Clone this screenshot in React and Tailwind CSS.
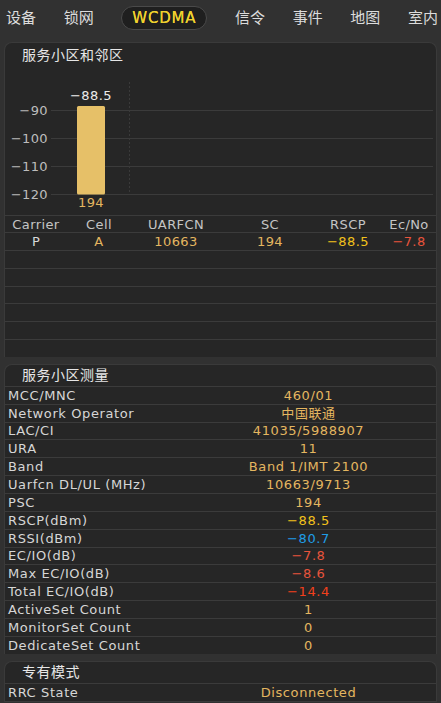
import React from "react";

const FONT = { fontFamily: '"DejaVu Sans", "Noto Sans CJK SC", sans-serif' };

const tabs = ["设备", "锁网", "WCDMA", "信令", "事件", "地图", "室内"];

const GOLD = "text-[#e4b660]";

const measures = [
  ["MCC/MNC", "460/01", GOLD],
  ["Network Operator", "中国联通", GOLD],
  ["LAC/CI", "41035/5988907", GOLD],
  ["URA", "11", GOLD],
  ["Band", "Band 1/IMT 2100", GOLD],
  ["Uarfcn DL/UL (MHz)", "10663/9713", GOLD],
  ["PSC", "194", GOLD],
  ["RSCP(dBm)", "−88.5", "text-[#f2c21c]"],
  ["RSSI(dBm)", "−80.7", "text-[#1f9de6]"],
  ["EC/IO(dB)", "−7.8", "text-[#e8543c]"],
  ["Max EC/IO(dB)", "−8.6", "text-[#e8543c]"],
  ["Total EC/IO(dB)", "−14.4", "text-[#f2401c]"],
  ["ActiveSet Count", "1", GOLD],
  ["MonitorSet Count", "0", GOLD],
  ["DedicateSet Count", "0", GOLD],
];

function Chart() {
  const ticks = [
    ["−90", 110.5],
    ["−100", 138.5],
    ["−110", 166.5],
    ["−120", 194.5],
  ];
  return (
    <svg width="436" height="147" viewBox="4 68 436 147" className="block">
      {ticks.map(([t, y]) => (
        <g key={t}>
          <line x1="50" x2="432" y1={y} y2={y} stroke="#3b3b3b" strokeWidth="1" />
          <text x="47" y={y + 4.5} textAnchor="end" fontSize="13" fill="#bdbdbd" letterSpacing="0.4" style={FONT}>
            {t}
          </text>
        </g>
      ))}
      <line x1="128.5" x2="128.5" y1="82" y2="192" stroke="#3a3a3a" strokeDasharray="2 2" />
      <rect x="76" y="106" width="28" height="88.5" rx="1.5" fill="#e6c068" />
      <text x="90" y="99.5" textAnchor="middle" fontSize="13" fill="#ececec" letterSpacing="0.4" style={FONT}>
        −88.5
      </text>
      <text x="90" y="207" textAnchor="middle" fontSize="13" fill="#e4b660" letterSpacing="0.4" style={FONT}>
        194
      </text>
    </svg>
  );
}

function NeighborTable() {
  const cols = "grid grid-cols-[62px_64px_90px_98px_58px_64px]";
  return (
    <div className="text-[13px] tracking-[0.4px]">
      <div className={`${cols} h-[17px] items-center border-t border-[#3b3b3b] text-[#c4c4c4]`}>
        {["Carrier", "Cell", "UARFCN", "SC", "RSCP", "Ec/No"].map((h) => (
          <div key={h} className="text-center leading-none">
            {h}
          </div>
        ))}
      </div>
      <div className={`${cols} h-[18px] items-center border-t border-[#3b3b3b]`}>
        <div className="text-center leading-none text-[#d8d8d8]">P</div>
        <div className={`text-center leading-none ${GOLD}`}>A</div>
        <div className={`text-center leading-none ${GOLD}`}>10663</div>
        <div className={`text-center leading-none ${GOLD}`}>194</div>
        <div className="text-center leading-none text-[#f2c21c]">−88.5</div>
        <div className="text-center leading-none text-[#e8543c]">−7.8</div>
      </div>
      {[0, 1, 2, 3, 4, 5].map((i) => (
        <div key={i} className="h-[17.8px] border-t border-[#3b3b3b]" />
      ))}
    </div>
  );
}

function Row({ label, value, color }) {
  return (
    <div className="grid h-[17.86px] grid-cols-[176px_1fr] items-center border-t border-[#3b3b3b] text-[13px] leading-none tracking-[0.6px]">
      <div className="pl-[3px] text-[#d6d6d6]">{label}</div>
      <div className={`text-center ${color}`}>{value}</div>
    </div>
  );
}

function Panel({ title, children, className = "" }) {
  return (
    <div className={`mx-[4px] rounded-t-[8px] border border-b-0 border-[#3a3a3a] bg-[#262626] ${className}`}>
      <div className="flex h-[21px] items-center pl-[17px] text-[14px] tracking-[0.5px] text-[#e6e6e6]">{title}</div>
      {children}
    </div>
  );
}

export default function App() {
  return (
    <div className="h-[703px] w-[441px] overflow-hidden bg-[#313131]" style={FONT}>
      <div className="flex h-[36px] items-center justify-between pl-[6px] pr-[3px] text-[15px] text-[#dcdcdc]">
        {tabs.map((t) =>
          t === "WCDMA" ? (
            <div
              key={t}
              className="flex h-[24px] items-center rounded-full border border-[#4a4a4a] bg-[#1f1f1f] px-[10px] text-[15px] tracking-[0.8px] text-[#f0d22e] [text-shadow:0_0_0.6px_#f0d22e]"
            >
              {t}
            </div>
          ) : (
            <div key={t}>{t}</div>
          )
        )}
      </div>

      <Panel title="服务小区和邻区" className="mt-[6px] pt-[2px]">
        <div className="h-[2px]" />
        <Chart />
        <NeighborTable />
      </Panel>

      <Panel title="服务小区测量" className="mt-[7px]">
        {measures.map(([l, v, c]) => (
          <Row key={l} label={l} value={v} color={c} />
        ))}
      </Panel>

      <Panel title="专有模式" className="mt-[7px]">
        <Row label="RRC State" value="Disconnected" color={GOLD} />
        <div className="border-t border-[#3b3b3b]" />
      </Panel>
    </div>
  );
}
